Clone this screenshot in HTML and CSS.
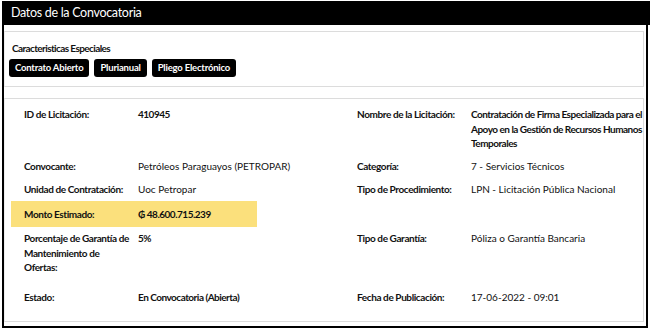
FILE: index.html
```html
<!DOCTYPE html>
<html lang="es">
  <head>
    <meta charset="utf-8">
    <title>Datos de la Convocatoria</title>
    <link rel="stylesheet" href="styles.css">
  </head>
  <body>
    <div class="panel">
      <div class="panel-titulo">Datos de la Convocatoria</div>

      <div class="caja caja-especiales">
        <div class="subtitulo">Caracteristicas Especiales</div>
        <div class="etiquetas">
          <span class="etiqueta-negra">Contrato Abierto</span>
          <span class="etiqueta-negra">Plurianual</span>
          <span class="etiqueta-negra">Pliego Electrónico</span>
        </div>
      </div>

      <div class="caja caja-datos">
        <div class="fila">
          <div class="campo">
            <div class="nombre">ID de Licitación:</div>
            <div class="valor negrita">410945</div>
          </div>
          <div class="campo campo-der">
            <div class="nombre">Nombre de la Licitación:</div>
            <div class="valor negrita">Contratación de Firma Especializada para el<br>Apoyo en la Gestión de Recursos Humanos<br>Temporales</div>
          </div>
        </div>

        <div class="fila">
          <div class="campo">
            <div class="nombre">Convocante:</div>
            <div class="valor">Petróleos Paraguayos (PETROPAR)</div>
          </div>
          <div class="campo campo-der">
            <div class="nombre">Categoría:</div>
            <div class="valor">7 - Servicios Técnicos</div>
          </div>
        </div>

        <div class="fila">
          <div class="campo">
            <div class="nombre">Unidad de Contratación:</div>
            <div class="valor">Uoc Petropar</div>
          </div>
          <div class="campo campo-der">
            <div class="nombre">Tipo de Procedimiento:</div>
            <div class="valor">LPN - Licitación Pública Nacional</div>
          </div>
        </div>

        <div class="fila">
          <div class="campo resaltado">
            <div class="nombre">Monto Estimado:</div>
            <div class="valor negrita">₲ 48.600.715.239</div>
          </div>
        </div>

        <div class="fila">
          <div class="campo">
            <div class="nombre">Porcentaje de Garantía de<br>Mantenimiento de<br>Ofertas:</div>
            <div class="valor negrita">5%</div>
          </div>
          <div class="campo campo-der">
            <div class="nombre">Tipo de Garantía:</div>
            <div class="valor">Póliza o Garantía Bancaria</div>
          </div>
        </div>

        <div class="fila fila-ultima">
          <div class="campo">
            <div class="nombre">Estado:</div>
            <div class="valor negrita">En Convocatoria (Abierta)</div>
          </div>
          <div class="campo campo-der">
            <div class="nombre">Fecha de Publicación:</div>
            <div class="valor">17-06-2022 - 09:01</div>
          </div>
        </div>
      </div>
    </div>
  </body>
</html>
```

FILE: styles.css
```css
body {
  margin: 0;
  padding: 0;
  background: #fff;
  color: #111;
  font-family: Lato, "Open Sans", sans-serif;
  font-size: 10px;
}

.panel {
  margin: 1px 2px 0 2px;
  border: 2px solid #000;
  border-top: 0;
  padding-bottom: 4px;
  width: 642px;
}

.panel-titulo {
  background-color: #000;
  color: #fff;
  height: 24px;
  line-height: 24px;
  padding-left: 9px;
  font-size: 12.5px;
  letter-spacing: -0.3px;
  margin: 0 -4px 0 -2px;
}

/* cajas con borde gris */
.caja {
  border: 1px solid #dcdcdc;
  border-left-color: #eee;
  margin-right: 2px;
}

.caja-especiales {
  margin-top: 6px;
  padding: 9px 0 9px 4px;
}

.subtitulo {
  font-weight: bold;
  letter-spacing: -0.6px;
  line-height: 14px;
  padding-left: 3px;
  margin-bottom: 4px;
}

.etiquetas {
  display: flex;
  gap: 5px;
}

.etiqueta-negra {
  background-color: #000;
  color: #fff;
  font-weight: bold;
  font-size: 9.5px;
  letter-spacing: -0.2px;
  height: 18px;
  line-height: 18px;
  padding: 0 6px;
  border-radius: 3px;
}

.caja-datos {
  margin-top: 11px;
  padding: 4px 0 12px 0;
}

.fila {
  display: flex;
}

.fila-ultima {
  margin-top: 7px;
}

.campo {
  display: flex;
  flex-shrink: 0;
  width: 320px;
  padding: 4px 0 4.5px 13px;
  line-height: 14.5px;
  margin-left: 6px;
}

.campo-der {
  width: 286px;
  margin-left: 0;
}

.nombre {
  width: 114px;
  flex-shrink: 0;
  font-weight: bold;
  letter-spacing: -0.4px;
  padding-right: 3px;
  box-sizing: border-box;
}

.valor {
  flex: 1;
  white-space: nowrap;
}

.negrita {
  font-weight: bold;
  letter-spacing: -0.5px;
}

.resaltado {
  background-color: #fbe07c;
  width: 233px;
  padding-top: 5.75px;
  padding-bottom: 5.75px;
}
```
